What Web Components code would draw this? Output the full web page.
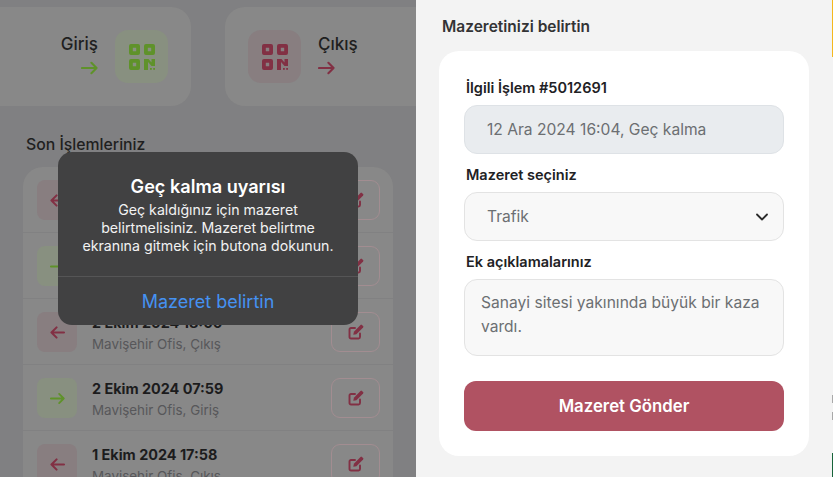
<!doctype html>
<html lang="tr">
<head>
<meta charset="utf-8">
<title>Mazeret</title>
<style>
html, body { margin: 0; height: 100%; overflow: hidden; }
body { font-family: 'Inter', 'Liberation Sans', sans-serif; }
</style>
</head>
<body>
<app-screen>
  <home-panel slot="left">
    <entry-card type="in" label="Giriş"></entry-card>
    <entry-card type="out" label="Çıkış"></entry-card>
    <span slot="heading">Son İşlemleriniz</span>
    <history-list slot="list">
      <history-row type="out"></history-row>
      <history-row type="in"></history-row>
      <history-row type="out" date="2 Ekim 2024 18:00" place="Mavişehir Ofis, Çıkış"></history-row>
      <history-row type="in" date="2 Ekim 2024 07:59" place="Mavişehir Ofis, Giriş"></history-row>
      <history-row type="out" date="1 Ekim 2024 17:58" place="Mavişehir Ofis, Çıkış"></history-row>
    </history-list>
    <alert-box slot="alert" heading="Geç kalma uyarısı" action="Mazeret belirtin">Geç kaldığınız için mazeret belirtmelisiniz. Mazeret belirtme ekranına gitmek için butona dokunun.</alert-box>
  </home-panel>
  <excuse-panel slot="right" heading="Mazeretinizi belirtin">
    <form-field label="İlgili İşlem #5012691" kind="disabled">12 Ara 2024 16:04, Geç kalma</form-field>
    <form-field label="Mazeret seçiniz" kind="select">Trafik</form-field>
    <form-field label="Ek açıklamalarınız" kind="area">Sanayi sitesi yakınında büyük bir kaza vardı.</form-field>
    <span slot="submit">Mazeret Gönder</span>
  </excuse-panel>
</app-screen>

<script>
const GREEN = '#5f922a'
const RED = '#823044'

function arrowRight(color, w, h) {
  return `<svg width="${w}" height="${h}" viewBox="0 0 18 14" fill="none" stroke="${color}" stroke-width="2.200" stroke-linecap="round" stroke-linejoin="round"><path d="M1 7h15.500M11 1.500 16.500 7 11 12.500"/></svg>`
}
function arrowLeft(color) {
  return `<svg width="15" height="13" viewBox="0 0 16 14" fill="none" stroke="${color}" stroke-width="2.200" stroke-linecap="round" stroke-linejoin="round"><path d="M15 7H1.500M7 1.500 1.500 7 7 12.500"/></svg>`
}
function qrIcon(color) {
  return `<svg width="26" height="26" viewBox="0 0 26 26" fill="${color}" fill-rule="evenodd">
    <path d="M2 0h7a2 2 0 0 1 2 2v7a2 2 0 0 1-2 2H2a2 2 0 0 1-2-2V2a2 2 0 0 1 2-2zM3.800 3.800v3.400h3.400V3.800z"/>
    <path d="M17 0h7a2 2 0 0 1 2 2v7a2 2 0 0 1-2 2h-7a2 2 0 0 1-2-2V2a2 2 0 0 1 2-2zM18.800 3.800v3.400h3.400V3.800z"/>
    <path d="M2 15h7a2 2 0 0 1 2 2v7a2 2 0 0 1-2 2H2a2 2 0 0 1-2-2v-7a2 2 0 0 1 2-2zM3.800 18.800v3.400h3.400v-3.400z"/>
    <path d="M15 15h4.500l3 3.500V15H26v7h-3.500L19 18v8h-4z"/>
    <rect x="21" y="24" width="1.800" height="1.800"/><rect x="24.200" y="24" width="1.800" height="1.800"/>
  </svg>`
}
function editIcon(color) {
  return `<svg width="16" height="16" viewBox="0 0 16 16" fill="none" stroke="${color}" stroke-linecap="round" stroke-linejoin="round">
    <path stroke-width="1.900" d="M12 9.500V13a1.500 1.500 0 0 1-1.500 1.500H3A1.500 1.500 0 0 1 1.500 13V5.500A1.500 1.500 0 0 1 3 4h4"/>
    <path stroke="none" fill="${color}" d="M12.500.900a1 1 0 0 1 1.400 0l1.200 1.200a1 1 0 0 1 0 1.400L8.400 10.200l-3.100.6.600-3.100z"/>
  </svg>`
}

class AppScreen extends HTMLElement {
  constructor() {
    super()
    this.attachShadow({ mode: 'open' })
    this.shadowRoot.innerHTML = `
    <style>
      :host { display: flex; width: 833px; height: 477px; overflow: hidden; }
      ::slotted([slot=left]) { flex: 0 0 416px; }
      ::slotted([slot=right]) { flex: 1; }
    </style>
    <slot name="left"></slot><slot name="right"></slot>`
  }
}

class HomePanel extends HTMLElement {
  constructor() {
    super()
    this.attachShadow({ mode: 'open' })
    this.shadowRoot.innerHTML = `
    <style>
      :host { display: block; position: relative; height: 477px; overflow: hidden; background: #808082; color: #1f1f20; }
      .cards { display: grid; grid-template-columns: 211px 211px; gap: 34px; margin: 7px 0 0 -20px; }
      h2 { margin: 29px 0 13px 26px; font-size: 15.800px; line-height: 20px; font-weight: 500; color: #1f1f20; height: 19px; }
      ::slotted([slot=list]) { margin: 0 23px; }
    </style>
    <div class="cards"><slot></slot></div>
    <h2><slot name="heading"></slot></h2>
    <slot name="list"></slot>
    <slot name="alert"></slot>`
  }
}

class EntryCard extends HTMLElement {
  constructor() {
    super()
    this.attachShadow({ mode: 'open' })
    const isIn = this.getAttribute('type') == 'in'
    const color = isIn ? GREEN : RED
    this.shadowRoot.innerHTML = `
    <style>
      :host { display: flex; height: 99px; box-sizing: border-box; border-radius: 20px; background: #888888; align-items: center; gap: 17px; padding: 0 23px; }
      :host([type=in]) { justify-content: flex-end; }
      .txt { display: flex; flex-direction: column; gap: 7px; font-size: 17px; line-height: 20px; font-weight: 500; margin-top: -5px; }
      :host([type=in]) .txt { align-items: flex-end; }
      .arrow { display: block; height: 14px; }
      .tile { flex: none; width: 53px; height: 53px; border-radius: 13px; display: flex; align-items: center; justify-content: center; background: ${isIn ? '#889080' : '#887e80'}; }
      :host([type=in]) .tile { order: 2; }
      svg { display: block; }
    </style>
    <div class="tile">${qrIcon(color)}</div>
    <div class="txt"><span>${this.getAttribute('label')}</span><span class="arrow">${arrowRight(color, 17, 14)}</span></div>`
  }
}

class HistoryList extends HTMLElement {
  constructor() {
    super()
    this.attachShadow({ mode: 'open' })
    this.shadowRoot.innerHTML = `
    <style>
      :host { display: block; background: #888888; border-radius: 20px 20px 0 0; }
    </style>
    <slot></slot>`
  }
}

class HistoryRow extends HTMLElement {
  constructor() {
    super()
    this.attachShadow({ mode: 'open' })
    const isIn = this.getAttribute('type') == 'in'
    const date = this.getAttribute('date') || ''
    const place = this.getAttribute('place') || ''
    this.shadowRoot.innerHTML = `
    <style>
      :host { display: flex; align-items: center; box-sizing: border-box; height: 66px; padding: 13px 13px 12px 14px; border-bottom: 1px solid #818182; }
      .tile { flex: none; width: 40px; height: 40px; border-radius: 8px; display: flex; align-items: center; justify-content: center; background: ${isIn ? '#889080' : '#887e80'}; }
      .info { flex: 1; margin-left: 15px; padding-top: 2px; }
      .date { font-size: 14.400px; line-height: 20px; font-weight: 700; color: #1c1c1d; }
      .place { font-size: 13.400px; line-height: 20px; margin-top: 1px; color: #57575a; }
      .edit { flex: none; width: 49px; height: 40px; box-sizing: border-box; border: 1px solid #a28d91; border-radius: 9px; display: flex; align-items: center; justify-content: center; }
      svg { display: block; }
    </style>
    <div class="tile">${isIn ? arrowRight(GREEN, 15, 13) : arrowLeft(RED)}</div>
    <div class="info">${date ? `<div class="date">${date}</div><div class="place">${place}</div>` : ''}</div>
    <div class="edit">${editIcon(RED)}</div>`
  }
}

class AlertBox extends HTMLElement {
  constructor() {
    super()
    this.attachShadow({ mode: 'open' })
    this.shadowRoot.innerHTML = `
    <style>
      :host { display: block; position: absolute; left: 58px; top: 152px; width: 300px; height: 173px; border-radius: 14px; background: #414142; color: #fff; text-align: center; overflow: hidden; }
      .body { height: 125px; box-sizing: border-box; padding: 23px 16px 0; border-bottom: 1px solid #555556; }
      .head { font-size: 18.100px; line-height: 22px; font-weight: 600; }
      .msg { font-size: 14.200px; line-height: 18px; margin-top: 4px; color: #f2f2f2; }
      .act { height: 48px; display: flex; align-items: center; justify-content: center; font-size: 18px; color: #4592f2; }
    </style>
    <div class="body"><div class="head">${this.getAttribute('heading')}</div><div class="msg"><slot></slot></div></div>
    <div class="act">${this.getAttribute('action')}</div>`
  }
}

class ExcusePanel extends HTMLElement {
  constructor() {
    super()
    this.attachShadow({ mode: 'open' })
    this.shadowRoot.innerHTML = `
    <style>
      :host { display: block; position: relative; background: #f3f3f3; height: 477px; }
      h1 { margin: 0; padding: 17px 0 0 26px; height: 51px; box-sizing: border-box; font-size: 15.500px; line-height: 20px; font-weight: 600; color: #333335; }
      .card { margin: 0 24px 0 23px; height: 405px; box-sizing: border-box; background: #fff; border-radius: 20px; padding: 27px 25px 0; display: flex; flex-direction: column; gap: 11px; }
      .send { height: 50px; margin-top: 14px; border-radius: 12px; background: #b05262; color: #fff; font-size: 16.800px; font-weight: 600; display: flex; align-items: center; justify-content: center; }
      /* strip of the next screen showing at the edge */
      .edge { position: absolute; right: 0; top: 0; bottom: 0; width: 1px; }
      .edge i { position: absolute; left: 0; width: 1px; }
    </style>
    <h1>${this.getAttribute('heading')}</h1>
    <div class="card"><slot></slot><div class="send"><slot name="submit"></slot></div></div>
    <div class="edge">
      <i style="top:0;height:57px;background:#f4b81e"></i>
      <i style="top:395px;height:8px;background:#a9a9a9"></i>
      <i style="top:412px;height:8px;background:#a9a9a9"></i>
      <i style="top:453px;height:24px;background:#17643a"></i>
    </div>`
  }
}

class FormField extends HTMLElement {
  constructor() {
    super()
    this.attachShadow({ mode: 'open' })
    const kind = this.getAttribute('kind')
    const chevron = kind == 'select'
      ? `<svg width="12" height="8" viewBox="0 0 12 8" fill="none" stroke="#2b2b2b" stroke-width="1.800" stroke-linecap="round" stroke-linejoin="round"><path d="M1 1.500 6 6.500l5-5"/></svg>`
      : ''
    this.shadowRoot.innerHTML = `
    <style>
      :host { display: block; }
      label { display: block; font-size: 14.500px; line-height: 20px; font-weight: 600; color: #212124; margin: 0 0 7px 2px; }
      .box { box-sizing: border-box; height: 49px; border: 1px solid #e3e3e3; border-radius: 13px; background: #f8f8f8; padding: 0 22px; display: flex; align-items: center; justify-content: space-between; color: #6c6f72; font-size: 15.600px; }
      :host([kind=disabled]) .box { background: #e9ecef; border-color: #dee2e6; }
      :host([kind=select]) .box { padding-right: 15px; }
      :host([kind=area]) .box { height: 77px; align-items: flex-start; padding: 11px 16px; line-height: 24px; }
    </style>
    <label>${this.getAttribute('label')}</label>
    <div class="box"><span><slot></slot></span>${chevron}</div>`
  }
}

customElements.define('app-screen', AppScreen)
customElements.define('home-panel', HomePanel)
customElements.define('entry-card', EntryCard)
customElements.define('history-list', HistoryList)
customElements.define('history-row', HistoryRow)
customElements.define('alert-box', AlertBox)
customElements.define('excuse-panel', ExcusePanel)
customElements.define('form-field', FormField)
</script>
</body>
</html>
